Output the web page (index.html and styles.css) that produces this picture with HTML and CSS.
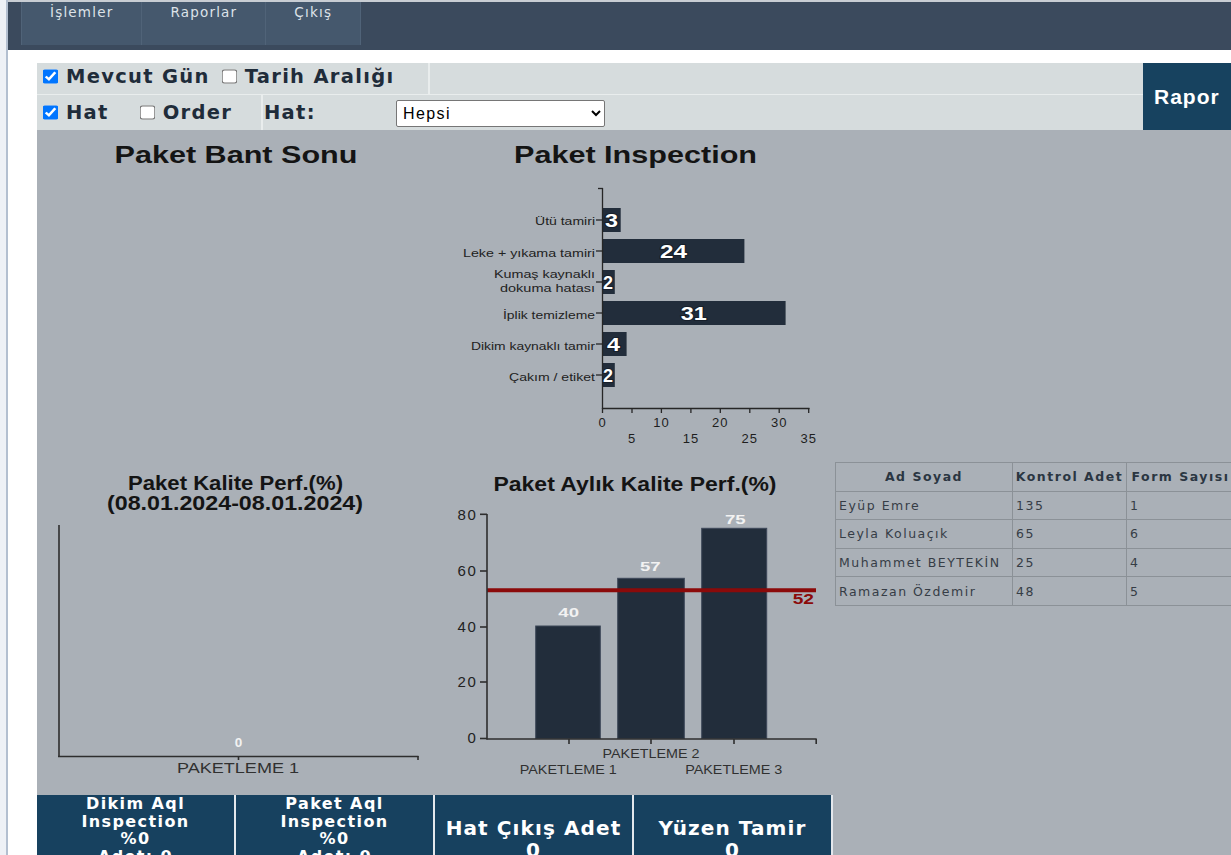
FILE: index.html
```html
<!DOCTYPE html>
<html lang="tr">
<head>
<meta charset="utf-8">
<title>Paket Kalite Raporu</title>
<link rel="stylesheet" href="styles.css">
</head>
<body>
<div class="frame">
  <header class="topbar">
    <nav class="menu">
      <a class="menu-item" href="#">İşlemler</a>
      <a class="menu-item" href="#">Raporlar</a>
      <a class="menu-item" href="#">Çıkış</a>
    </nav>
  </header>

  <main class="content">
    <form class="filters">
      <div class="filter-rows">
        <div class="filter-row row-date">
          <div class="cell cell-date">
            <label class="opt"><input type="checkbox" checked>Mevcut Gün</label>
            <label class="opt opt-next"><input type="checkbox">Tarih Aralığı</label>
          </div>
        </div>
        <div class="filter-row row-line">
          <div class="cell cell-kind">
            <label class="opt"><input type="checkbox" checked>Hat</label>
            <label class="opt opt-far"><input type="checkbox">Order</label>
          </div>
          <div class="cell cell-label"><span class="opt">Hat:</span></div>
          <select class="line-select">
            <option>Hepsi</option>
            <option>PAKETLEME 1</option>
            <option>PAKETLEME 2</option>
            <option>PAKETLEME 3</option>
          </select>
        </div>
      </div>
      <button type="button" class="report-btn">Rapor</button>
    </form>

    <section class="dashboard">
      <!-- Paket Bant Sonu: no data for the selected day -->
      <div class="panel">
        <svg class="chart" width="400" height="330" viewBox="0 0 400 330">
          <text class="chart-title" x="199" y="32.5" textLength="243" lengthAdjust="spacingAndGlyphs">Paket Bant Sonu</text>
        </svg>
      </div>

      <!-- Paket Inspection: defects by type, horizontal bars -->
      <div class="panel">
        <svg class="chart" width="398" height="330" viewBox="0 0 398 330">
          <text class="chart-title" x="198.5" y="32.5" textLength="243" lengthAdjust="spacingAndGlyphs">Paket Inspection</text>

          <g class="bars">
            <rect x="166" y="78" width="17.7" height="24"/>
            <rect x="166" y="109" width="141.4" height="24"/>
            <rect x="166" y="140" width="11.8" height="24"/>
            <rect x="166" y="171" width="182.6" height="24"/>
            <rect x="166" y="202" width="23.6" height="24"/>
            <rect x="166" y="233" width="11.8" height="24"/>
          </g>

          <g class="axis">
            <line x1="165.5" y1="58" x2="165.5" y2="279"/>
            <line x1="161" y1="58.5" x2="166" y2="58.5"/>
            <line x1="159" y1="90" x2="166" y2="90"/>
            <line x1="159" y1="121" x2="166" y2="121"/>
            <line x1="159" y1="152" x2="166" y2="152"/>
            <line x1="159" y1="183" x2="166" y2="183"/>
            <line x1="159" y1="214" x2="166" y2="214"/>
            <line x1="159" y1="245" x2="166" y2="245"/>
            <line x1="165" y1="278.5" x2="372.5" y2="278.5"/>
            <line x1="165.5" y1="278" x2="165.5" y2="283"/>
            <line x1="195" y1="278" x2="195" y2="283"/>
            <line x1="224.4" y1="278" x2="224.4" y2="283"/>
            <line x1="253.9" y1="278" x2="253.9" y2="283"/>
            <line x1="283.3" y1="278" x2="283.3" y2="283"/>
            <line x1="312.8" y1="278" x2="312.8" y2="283"/>
            <line x1="342.2" y1="278" x2="342.2" y2="283"/>
            <line x1="371.7" y1="278" x2="371.7" y2="283"/>
          </g>

          <g class="cat-end">
            <text x="158" y="94.7" textLength="60" lengthAdjust="spacingAndGlyphs">Ütü tamiri</text>
            <text x="158" y="126.7" textLength="132" lengthAdjust="spacingAndGlyphs">Leke + yıkama tamiri</text>
            <text x="158" y="148.3" textLength="101" lengthAdjust="spacingAndGlyphs">Kumaş kaynaklı</text>
            <text x="158" y="162.3" textLength="95" lengthAdjust="spacingAndGlyphs">dokuma hatası</text>
            <text x="158" y="189" textLength="92" lengthAdjust="spacingAndGlyphs">İplik temizleme</text>
            <text x="158" y="219.7" textLength="124" lengthAdjust="spacingAndGlyphs">Dikim kaynaklı tamir</text>
            <text x="158" y="250.7" textLength="86" lengthAdjust="spacingAndGlyphs">Çakım / etiket</text>
          </g>

          <g class="bar-label">
            <text x="168" y="96.5" textLength="13" lengthAdjust="spacingAndGlyphs">3</text>
            <text class="mid" x="236.5" y="127.5" textLength="27" lengthAdjust="spacingAndGlyphs">24</text>
            <text x="166" y="158.5" textLength="10" lengthAdjust="spacingAndGlyphs">2</text>
            <text class="mid" x="256.7" y="189.5" textLength="26" lengthAdjust="spacingAndGlyphs">31</text>
            <text x="170" y="220.5" textLength="13" lengthAdjust="spacingAndGlyphs">4</text>
            <text x="166" y="251.5" textLength="10" lengthAdjust="spacingAndGlyphs">2</text>
          </g>

          <g class="tick-label">
            <text x="165.5" y="296.5">0</text>
            <text x="224.4" y="296.5">10</text>
            <text x="283.3" y="296.5">20</text>
            <text x="342.2" y="296.5">30</text>
            <text x="195" y="312.5">5</text>
            <text x="253.9" y="312.5">15</text>
            <text x="312.8" y="312.5">25</text>
            <text x="371.7" y="312.5">35</text>
          </g>
        </svg>
      </div>

      <div class="panel"></div>

      <!-- Paket Kalite Perf. for the selected day -->
      <div class="panel">
        <svg class="chart" width="400" height="330" viewBox="0 0 400 330">
          <text class="chart-title small" x="198.5" y="30" textLength="215" lengthAdjust="spacingAndGlyphs">Paket Kalite Perf.(%)</text>
          <text class="chart-title small" x="198" y="50" textLength="256" lengthAdjust="spacingAndGlyphs">(08.01.2024-08.01.2024)</text>
          <g class="axis thick">
            <line x1="22" y1="65" x2="22" y2="297"/>
            <line x1="21" y1="296.5" x2="381.5" y2="296.5"/>
            <line x1="201.5" y1="296" x2="201.5" y2="300"/>
            <line x1="381" y1="296" x2="381" y2="300"/>
          </g>
          <text class="col-value" x="201.5" y="287">0</text>
          <text class="cat-mid big" x="201" y="313" textLength="122" lengthAdjust="spacingAndGlyphs">PAKETLEME 1</text>
        </svg>
      </div>

      <!-- Paket Aylık Kalite Perf. with the target line -->
      <div class="panel">
        <svg class="chart" width="398" height="330" viewBox="0 0 398 330">
          <text class="chart-title small" x="198" y="31" textLength="283" lengthAdjust="spacingAndGlyphs">Paket Aylık Kalite Perf.(%)</text>

          <g class="cols">
            <rect x="98.7" y="166" width="64.6" height="112.5"/>
            <rect x="180.7" y="118.3" width="66.6" height="160.2"/>
            <rect x="264.7" y="68.3" width="65" height="210.2"/>
          </g>

          <line class="target" x1="50" y1="130.2" x2="379" y2="130.2"/>

          <g class="axis thick">
            <line x1="50" y1="54" x2="50" y2="279.5"/>
            <line x1="49.5" y1="279" x2="379.7" y2="279"/>
            <line x1="43" y1="54.3" x2="50" y2="54.3"/>
            <line x1="43" y1="111" x2="50" y2="111"/>
            <line x1="43" y1="167" x2="50" y2="167"/>
            <line x1="43" y1="222" x2="50" y2="222"/>
            <line x1="43" y1="278.5" x2="50" y2="278.5"/>
            <line x1="132" y1="279" x2="132" y2="284"/>
            <line x1="214" y1="279" x2="214" y2="284"/>
            <line x1="297" y1="279" x2="297" y2="284"/>
            <line x1="379.2" y1="279" x2="379.2" y2="284"/>
          </g>

          <g class="y-label">
            <text x="40.3" y="59.6">80</text>
            <text x="40.3" y="116.3">60</text>
            <text x="40.3" y="172.3">40</text>
            <text x="40.3" y="227.3">20</text>
            <text x="40.3" y="283.3">0</text>
          </g>

          <g class="col-value">
            <text x="131.7" y="156.7" textLength="20.7" lengthAdjust="spacingAndGlyphs">40</text>
            <text x="213.3" y="111" textLength="20.7" lengthAdjust="spacingAndGlyphs">57</text>
            <text x="298.3" y="64.3" textLength="20.7" lengthAdjust="spacingAndGlyphs">75</text>
          </g>
          <text class="target-label" x="377" y="144" textLength="21.3" lengthAdjust="spacingAndGlyphs">52</text>

          <g class="cat-mid">
            <text x="214" y="297.7" textLength="97" lengthAdjust="spacingAndGlyphs">PAKETLEME 2</text>
            <text x="131.3" y="314.3" textLength="97" lengthAdjust="spacingAndGlyphs">PAKETLEME 1</text>
            <text x="296.7" y="314.3" textLength="97" lengthAdjust="spacingAndGlyphs">PAKETLEME 3</text>
          </g>
        </svg>
      </div>

      <div class="panel panel-table">
        <table class="staff">
          <colgroup>
            <col class="c-name"><col class="c-count"><col class="c-form">
          </colgroup>
          <thead>
            <tr><th>Ad Soyad</th><th>Kontrol Adet</th><th>Form Sayısı</th></tr>
          </thead>
          <tbody>
            <tr><td>Eyüp Emre</td><td>135</td><td>1</td></tr>
            <tr><td>Leyla Koluaçık</td><td>65</td><td>6</td></tr>
            <tr><td>Muhammet BEYTEKİN</td><td>25</td><td>4</td></tr>
            <tr><td>Ramazan Özdemir</td><td>48</td><td>5</td></tr>
          </tbody>
        </table>
      </div>

      <div class="tiles">
        <div class="tile tile-sm">
          <span>Dikim Aql</span><span>Inspection</span><span>%0</span><span>Adet: 0</span>
        </div>
        <div class="tile tile-sm">
          <span>Paket Aql</span><span>Inspection</span><span>%0</span><span>Adet: 0</span>
        </div>
        <div class="tile tile-lg">
          <span>Hat Çıkış Adet</span><span>0</span>
        </div>
        <div class="tile tile-lg">
          <span>Yüzen Tamir</span><span>0</span>
        </div>
      </div>
    </section>
  </main>
</div>
</body>
</html>
```

FILE: styles.css
```css
* { box-sizing: border-box; }

html, body {
  margin: 0;
  height: 100%;
}

body {
  background: #eef1f6;
  overflow: hidden;
  font-family: "DejaVu Sans", Verdana, sans-serif;
}

.frame {
  margin-left: 6px;
  width: 1320px;
  min-height: 100vh;
  border-left: 2px solid #b3bfd0;
  background: #fff;
}

/* top menu */
.topbar {
  height: 50px;
  padding-left: 13px;
  background: #3b4a5d;
  border-top: 2px solid #c8cdd3;
}

.menu {
  display: flex;
  height: 43px;
}

.menu-item {
  display: block;
  padding: 1px 28px 0;
  background: #45586d;
  border-right: 1px solid #506378;
  color: #dde3e9;
  font-size: 13.5px;
  line-height: 18px;
  letter-spacing: 1.2px;
  text-decoration: none;
}

.menu-item:first-child { border-left: 1px solid #506378; }

/* filter form */
.content {
  padding: 13px 0 0 29px;
}

.filters {
  display: flex;
}

.filter-rows {
  width: 1106px;
  background: #d6dcdd;
}

.filter-row {
  display: flex;
  align-items: stretch;
}

.row-date {
  height: 32px;
  border-bottom: 1px solid #e9eded;
}

.row-line {
  height: 35px;
}

.cell {
  display: flex;
  align-items: center;
}

.cell-date {
  width: 393px;
  padding: 0 0 5px 5px;
  border-right: 2px solid #e9eded;
}

.cell-kind {
  width: 226px;
  padding-left: 5px;
  border-right: 2px solid #e9eded;
}

.cell-label {
  width: 133px;
  padding-left: 1px;
}

.opt {
  display: flex;
  align-items: center;
  color: #1f2c3a;
  font-size: 19.5px;
  font-weight: bold;
  letter-spacing: 1.3px;
  white-space: nowrap;
}

/* checkboxes are drawn a little wider than the native 13px square */
.opt input {
  width: 13px;
  height: 13px;
  margin: 0 9px 0 2px;
  transform: scale(1.23, 1.08);
}

.opt-next { margin-left: 11px; }
.opt-far { margin-left: 30px; }

.line-select {
  align-self: center;
  width: 209px;
  height: 27px;
  margin-top: 1px;
  padding-left: 2px;
  background: #fff;
  border: 1px solid #767676;
  border-radius: 2px;
  color: #000;
  font-family: "Liberation Sans", Arial, sans-serif;
  font-size: 16px;
  letter-spacing: 1.4px;
}

.report-btn {
  width: 100px;
  height: 67px;
  padding: 0 0 0 11px;
  background: #17425f;
  border: 0;
  color: #fff;
  font-family: "Liberation Sans", Arial, sans-serif;
  font-size: 21px;
  font-weight: bold;
  letter-spacing: 1px;
  text-align: left;
}

/* dashboard */
.dashboard {
  display: grid;
  grid-template-columns: 400px 398px 1fr;
  grid-template-rows: 330px 330px auto;
  min-height: 800px;
  background: #aab0b7;
}

.panel { position: relative; }

.chart {
  display: block;
  font-family: "Liberation Sans", Arial, sans-serif;
}

.chart-title {
  fill: #141414;
  font-size: 23px;
  font-weight: bold;
  text-anchor: middle;
}

.chart-title.small { font-size: 19.5px; }

.axis line {
  stroke: #262626;
  stroke-width: 1.3;
}

.axis.thick line {
  stroke: #2e2e2e;
  stroke-width: 1.6;
}

.bars rect {
  fill: #222d3b;
}

.cols rect {
  fill: #222d3b;
  stroke: #3d4859;
  stroke-width: 1;
}

.target {
  stroke: #8b0a0a;
  stroke-width: 4;
}

.target-label {
  fill: #8b0a0a;
  font-size: 14px;
  font-weight: bold;
  text-anchor: end;
}

.cat-end text {
  fill: #222;
  font-size: 11px;
  text-anchor: end;
}

.bar-label text {
  fill: #fff;
  stroke: #18202b;
  stroke-width: 2px;
  paint-order: stroke;
  font-size: 18px;
  font-weight: bold;
}

.bar-label text.mid { text-anchor: middle; }

.tick-label text {
  fill: #1e1e1e;
  font-size: 13px;
  letter-spacing: 1px;
  text-anchor: middle;
}

.y-label text {
  fill: #222;
  font-size: 15px;
  letter-spacing: 1.5px;
  text-anchor: end;
}

.col-value,
.col-value text {
  fill: #f2f2f2;
  font-size: 13.5px;
  font-weight: bold;
  text-anchor: middle;
}

.cat-mid,
.cat-mid text {
  fill: #303030;
  font-size: 12.5px;
  text-anchor: middle;
}

.cat-mid.big { font-size: 15px; }

/* control staff table */
.panel-table {
  padding-top: 2px;
}

.staff {
  width: 399px;
  table-layout: fixed;
  border-collapse: collapse;
  color: #363d46;
  font-size: 12.5px;
  letter-spacing: 1.5px;
}

.c-name { width: 177px; }
.c-count { width: 114px; }
.c-form { width: 108px; }

.staff th,
.staff td {
  height: 28.6px;
  padding: 0 2px 0 3px;
  border: 1px solid #8b9197;
  text-align: left;
  white-space: nowrap;
  overflow: hidden;
}

.staff th {
  color: #2b3642;
  font-weight: bold;
  text-align: center;
  padding: 0;
}

/* summary tiles */
.tiles {
  grid-column: 1 / -1;
  justify-self: start;
  display: flex;
  gap: 2px;
  margin-top: 5px;
  padding-right: 2px;
  background: #e3e7ec;
}

.tile {
  display: flex;
  flex-direction: column;
  justify-content: flex-start;
  align-items: center;
  width: 197px;
  height: 88px;
  background: #17415f;
  color: #fff;
  font-weight: bold;
  text-align: center;
  white-space: nowrap;
}

.tile-sm {
  padding-top: 0;
  font-size: 16px;
  line-height: 17.5px;
  letter-spacing: 1.4px;
}

.tile-lg {
  padding-top: 22px;
  font-size: 20px;
  line-height: 22px;
  letter-spacing: 1.1px;
}
```
